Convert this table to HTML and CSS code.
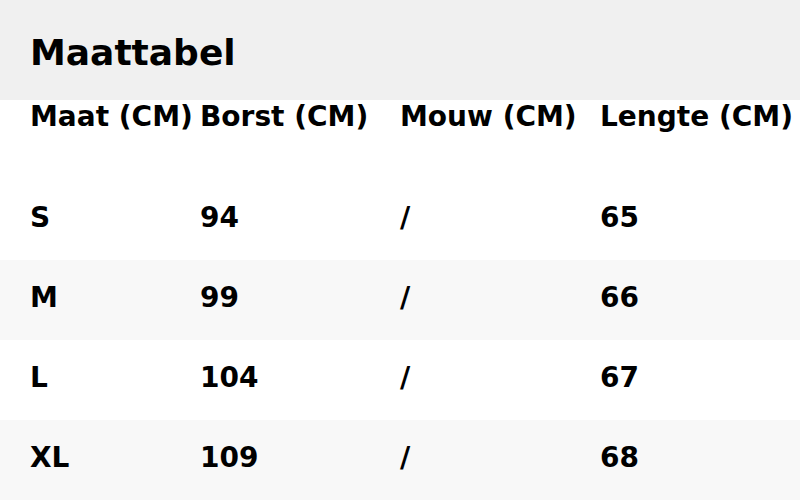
FILE: index.html
```html
<!DOCTYPE html>
<html lang="nl">
<head>
<meta charset="utf-8">
<title>Maattabel</title>
<link rel="stylesheet" href="styles.css">
</head>
<body>
<div class="page">
  <header class="title-bar">
    <h1 class="title">Maattabel</h1>
  </header>
  <div class="table">
    <div class="row head">
      <div class="cell">Maat (CM)</div>
      <div class="cell">Borst (CM)</div>
      <div class="cell">Mouw (CM)</div>
      <div class="cell">Lengte (CM)</div>
    </div>
    <div class="row">
      <div class="cell">S</div>
      <div class="cell">94</div>
      <div class="cell">/</div>
      <div class="cell">65</div>
    </div>
    <div class="row alt">
      <div class="cell">M</div>
      <div class="cell">99</div>
      <div class="cell">/</div>
      <div class="cell">66</div>
    </div>
    <div class="row">
      <div class="cell">L</div>
      <div class="cell">104</div>
      <div class="cell">/</div>
      <div class="cell">67</div>
    </div>
    <div class="row alt">
      <div class="cell">XL</div>
      <div class="cell">109</div>
      <div class="cell">/</div>
      <div class="cell">68</div>
    </div>
  </div>
</div>
</body>
</html>
```
FILE: styles.css
```css
html, body {
  margin: 0;
  padding: 0;
  background: #ffffff;
}
body {
  font-family: "DejaVu Sans", "Liberation Sans", sans-serif;
  font-weight: bold;
  color: #000000;
  overflow: hidden;
}
.page {
  width: 800px;
  height: 500px;
  overflow: hidden;
}
.title-bar {
  height: 100px;
  box-sizing: border-box;
  background: #f0f0f0;
  padding: 32px 30px 0;
}
.title {
  margin: 0;
  font-size: 36px;
  font-weight: bold;
  line-height: normal;
}
.row {
  display: grid;
  grid-template-columns: 170px 200px 200px 200px;
  padding-left: 30px;
  height: 80px;
  box-sizing: border-box;
  padding-top: 21px;
  font-size: 28px;
  line-height: normal;
  white-space: nowrap;
}
.row.head {
  padding-top: 0;
}
.row.alt {
  background: #f8f8f8;
}
```
